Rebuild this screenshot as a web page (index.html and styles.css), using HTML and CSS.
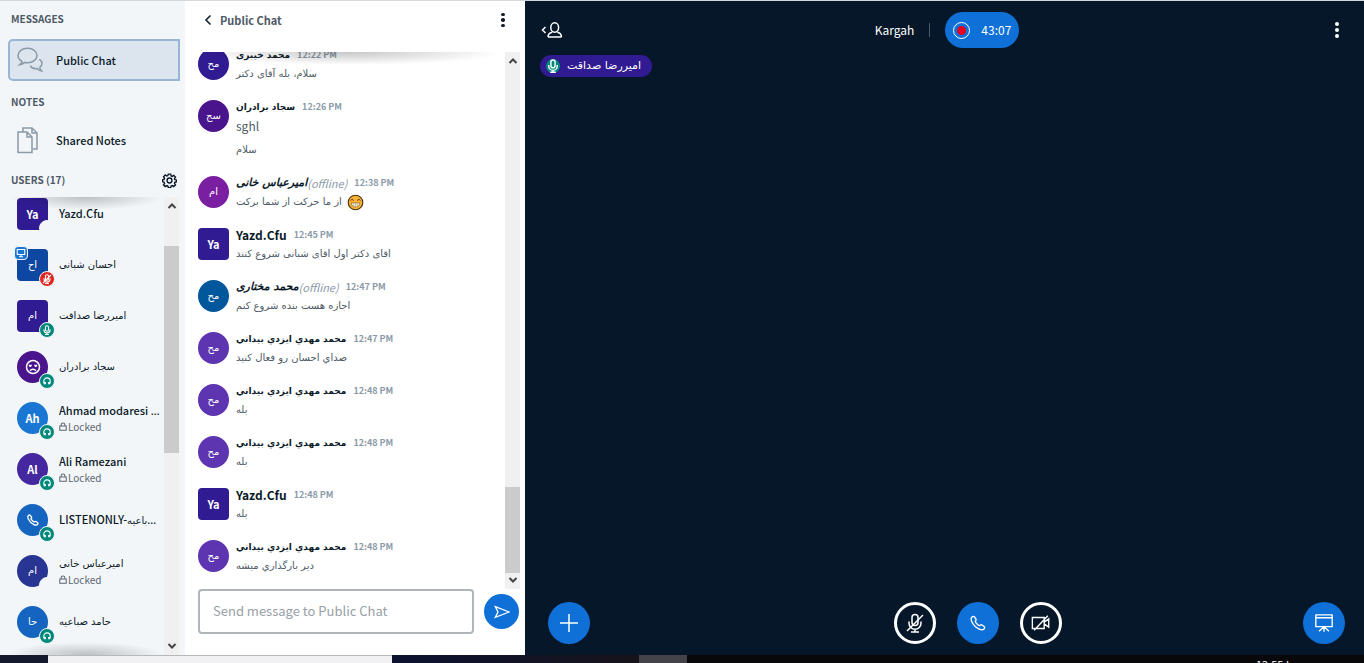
FILE: index.html
```html
<!DOCTYPE html>
<html lang="en">
<head>
<meta charset="utf-8">
<title>Kargah</title>
<link rel="stylesheet" href="styles.css">
</head>
<body>
<svg class="defs" aria-hidden="true">
  <symbol id="chat" viewBox="0 0 26 26"><path d="M5 14.3C2.600 13 1 11 1 8.500 1 4.400 5.200 1.200 10.500 1.200S20 4.400 20 8.500s-4.200 7.200-9.500 7.200c-1 0-2-.1-2.900-.3C6.300 16.700 4.500 17.600 2.700 17.800 4 16.800 4.800 15.600 5 14.300z"/><path d="M22.300 12.300c1.800.9 2.700 2.400 2.700 4.100 0 1.600-.8 3-2.200 3.900.1 1.400.7 2.600 1.700 3.600-1.800-.2-3.200-1-4.100-2.300-3.200.5-6-.7-7.200-3"/></symbol>
  <symbol id="notes" viewBox="0 0 26 28"><path d="M6 6V2h9l5 5v16h-4M15 2v5h5M1 6h9l5 5v15.500H1zM10 6v5h5"/></symbol>
  <symbol id="gear" viewBox="0 0 16 16"><circle cx="8" cy="8" r="2.600"/><path d="M6.700 1.200h2.600l.4 1.900 1.200.5 1.600-1.100 1.900 1.900-1.100 1.600.5 1.200 1.900.4v1.800l-1.900.4-.5 1.200 1.100 1.600-1.900 1.900-1.600-1.100-1.200.5-.4 1.900H6.700l-.4-1.900-1.200-.5-1.600 1.100-1.900-1.900L2.700 11l-.5-1.200-1.500-.4V7.200l1.500-.4.5-1.200L1.600 4 3.500 2.100l1.600 1.100 1.200-.5z"/></symbol>
  <symbol id="lock" viewBox="0 0 10 11"><path d="M1 5h8v5.300H1zM2.700 5V3.300a2.300 2.300 0 0 1 4.600 0V5"/></symbol>
  <symbol id="head" viewBox="0 0 12 12"><path d="M2.200 8V6a3.800 3.800 0 0 1 7.600 0v2"/><path d="M2.600 7v3M9.400 7v3M4 7.200v2.600M8 7.200v2.600"/></symbol>
  <symbol id="mic" viewBox="0 0 20 20"><rect x="7" y="1.500" width="6" height="11" rx="3"/><path d="M4 8.500v1.700a6 6 0 0 0 12 0V8.500M10 16v3M6 19h8"/></symbol>
  <symbol id="micoff" viewBox="0 0 20 20"><rect x="7" y="1.500" width="6" height="11" rx="3"/><path d="M4 8.500v1.700a6 6 0 0 0 12 0V8.500M10 16v3M6 19h8M18 2 2 18"/></symbol>
  <symbol id="screen" viewBox="0 0 12 12"><path d="M1.500 1.800h9v6h-9zM6 8v2M3.500 10.500h5"/></symbol>
  <symbol id="sad" viewBox="0 0 16 16"><circle cx="8" cy="8" r="6.500"/><path d="M3.800 6.600h3M9.200 6.600h3M5.200 7v1M10.800 7v1M5 11.800c1.600-2 4.400-2 6 0"/></symbol>
  <symbol id="phone" viewBox="0 0 18 18"><path d="M2.200 2.200c.9-.9 2-1 2.700-.2l1.700 2.300c.5.800.4 1.500-.3 2.200-.5.500-.4 1 .1 1.700.9 1.300 2 2.400 3.300 3.300.7.500 1.200.6 1.700.1.700-.7 1.400-.8 2.200-.3l2.300 1.700c.8.700.7 1.800-.2 2.700-1.300 1.300-3.200 1.200-5.300.2A18 18 0 0 1 2 7.500C1 5.400 1 3.500 2.200 2.200z"/></symbol>
  <symbol id="camoff" viewBox="0 0 22 18"><path d="M1.500 3h13v12h-13zM14.500 8l5-3.500v9l-5-3.500M18.500 1 3.500 17"/></symbol>
  <symbol id="board" viewBox="0 0 22 20"><path d="M1.500 1h19M2 1v13h18V1M2 4.200h18M11 14v5.500M11 14l-5.500 5M11 14l5.500 5"/></symbol>
  <symbol id="plus" viewBox="0 0 20 20"><path d="M10 1v18M1 10h18"/></symbol>
  <symbol id="send" viewBox="0 0 18 16"><path d="M1.500 2 17 8 1.500 14 4.500 8z"/></symbol>
  <symbol id="person" viewBox="0 0 22 16"><path d="M4.500 5 1.500 8l3 3M7 15c.2-3.300 2-4.500 4.300-4.800M20.500 15c-.2-3.300-2-4.500-4.300-4.800M7 15h13.500"/><ellipse cx="13.700" cy="5.500" rx="3.900" ry="4.700"/></symbol>
  <symbol id="left" viewBox="0 0 8 12"><path d="M6.500 1.500 2 6l4.500 4.500"/></symbol>
  <symbol id="up" viewBox="0 0 10 8"><path d="M1.500 6 5 2.500 8.500 6"/></symbol>
  <symbol id="down" viewBox="0 0 10 8"><path d="M1.500 2 5 5.500 8.500 2"/></symbol>
  <symbol id="grin" viewBox="0 0 18 18"><circle cx="9" cy="9" r="7.700" fill="#f9b233" stroke="#4b3510" stroke-width="1.200"/><path d="M3.800 6.800c.8-1.200 2.400-1.200 3.200 0M11 6.800c.8-1.200 2.400-1.200 3.200 0" fill="none" stroke="#3b2a10"/><path d="M4.500 9.500h9c0 2.800-1.800 4.200-4.500 4.200s-4.500-1.400-4.500-4.200z" fill="#fff" stroke="#8a6a30" stroke-width=".8"/><path d="M4.800 11.500h8.400M7 9.500v4M9 9.500v4M11 9.500v4" fill="none" stroke="#b79a62" stroke-width=".5"/></symbol>
</svg>

<div class="app">
  <nav class="sidebar">
    <h2 class="side-title">MESSAGES</h2>
    <button class="side-item active"><svg class="icon i26"><use href="#chat"/></svg>Public Chat</button>
    <h2 class="side-title">NOTES</h2>
    <button class="side-item"><svg class="icon i26"><use href="#notes"/></svg>Shared Notes</button>
    <div class="users-head"><h2 class="side-title">USERS (17)</h2><button class="bare" aria-label="Manage users"><svg class="icon i15"><use href="#gear"/></svg></button></div>
    <div class="users">
      <ul class="user-list">
        <li><span class="avatar sq c-indigo">Ya<i class="badge none"></i></span><span class="who">Yazd.Cfu</span></li>
        <li><span class="avatar sq c-navy"><bdi class="fa">اح</bdi><i class="badge pres"><svg class="icon i10"><use href="#screen"/></svg></i><i class="badge red"><svg class="icon i10 thin"><use href="#micoff"/></svg></i></span><span class="who fa">احسان شبانی</span></li>
        <li><span class="avatar sq c-indigo"><bdi class="fa">ام</bdi><i class="badge"><svg class="icon i10 thin"><use href="#mic"/></svg></i></span><span class="who fa">امیررضا صداقت</span></li>
        <li><span class="avatar c-purple"><svg class="icon i16"><use href="#sad"/></svg><i class="badge"><svg class="icon i10"><use href="#head"/></svg></i></span><span class="who fa">سجاد برادران</span></li>
        <li><span class="avatar c-sky">Ah<i class="badge"><svg class="icon i10"><use href="#head"/></svg></i></span><span class="who">Ahmad modaresi <span class="more">…</span><small><svg class="icon i8"><use href="#lock"/></svg>Locked</small></span></li>
        <li><span class="avatar c-violet">Al<i class="badge"><svg class="icon i10"><use href="#head"/></svg></i></span><span class="who">Ali Ramezani<small><svg class="icon i8"><use href="#lock"/></svg>Locked</small></span></li>
        <li><span class="avatar c-blue"><svg class="icon i12"><use href="#phone"/></svg><i class="badge"><svg class="icon i10"><use href="#head"/></svg></i></span><span class="who">LISTENONLY-<bdi class="fa">باعیه</bdi><span class="more">…</span></span></li>
        <li><span class="avatar c-dusk"><bdi class="fa">ام</bdi><i class="badge none"></i></span><span class="who"><bdi class="fa">امیرعباس خانی</bdi><small><svg class="icon i8"><use href="#lock"/></svg>Locked</small></span></li>
        <li><span class="avatar c-blue"><bdi class="fa">حا</bdi><i class="badge"><svg class="icon i10"><use href="#head"/></svg></i></span><span class="who fa">حامد صباعیه</span></li>
      </ul>
      <div class="scroll"><svg class="icon arrow"><use href="#up"/></svg><div class="track side-track"><i></i></div><svg class="icon arrow"><use href="#down"/></svg></div>
    </div>
  </nav>

  <section class="chat">
    <header class="chat-head"><button class="bare back"><svg class="icon chev"><use href="#left"/></svg>Public Chat</button><button class="bare dots" aria-label="Chat options"><i></i><i></i><i></i></button></header>
    <div class="history">
      <div class="messages">
        <article><span class="avatar c-indigo"><bdi class="fa">مح</bdi></span><div><h3><bdi class="fa">محمد خیبری</bdi><time>12:22 PM</time></h3><p class="fa"><bdi>سلام، بله آقای دکتر</bdi></p></div></article>
        <article><span class="avatar c-purple"><bdi class="fa">سج</bdi></span><div><h3><bdi class="fa">سجاد برادران</bdi><time>12:26 PM</time></h3><p>sghl</p><p class="fa next"><bdi>سلام</bdi></p></div></article>
        <article><span class="avatar c-magenta"><bdi class="fa">ام</bdi></span><div><h3><bdi class="fa off">امیرعباس خانی</bdi><em>(offline)</em><time>12:38 PM</time></h3><p class="fa"><bdi>از ما حرکت از شما برکت</bdi><svg class="emoji" role="img" aria-label="grin"><use href="#grin"/></svg></p></div></article>
        <article><span class="avatar sq c-indigo">Ya</span><div><h3>Yazd.Cfu<time>12:45 PM</time></h3><p class="fa"><bdi>اقای دکتر اول اقای شبانی شروع کنند</bdi></p></div></article>
        <article><span class="avatar c-ocean"><bdi class="fa">مح</bdi></span><div><h3><bdi class="fa off">محمد مختاری</bdi><em>(offline)</em><time>12:47 PM</time></h3><p class="fa"><bdi>اجازه هست بنده شروع کنم</bdi></p></div></article>
        <article><span class="avatar c-grape"><bdi class="fa">مح</bdi></span><div><h3><bdi class="fa">محمد مهدي ايزدي بيداني</bdi><time>12:47 PM</time></h3><p class="fa"><bdi>صداي احسان رو فعال كنيد</bdi></p></div></article>
        <article><span class="avatar c-grape"><bdi class="fa">مح</bdi></span><div><h3><bdi class="fa">محمد مهدي ايزدي بيداني</bdi><time>12:48 PM</time></h3><p class="fa"><bdi>بله</bdi></p></div></article>
        <article><span class="avatar c-grape"><bdi class="fa">مح</bdi></span><div><h3><bdi class="fa">محمد مهدي ايزدي بيداني</bdi><time>12:48 PM</time></h3><p class="fa"><bdi>بله</bdi></p></div></article>
        <article><span class="avatar sq c-indigo">Ya</span><div><h3>Yazd.Cfu<time>12:48 PM</time></h3><p class="fa"><bdi>بله</bdi></p></div></article>
        <article><span class="avatar c-grape"><bdi class="fa">مح</bdi></span><div><h3><bdi class="fa">محمد مهدي ايزدي بيداني</bdi><time>12:48 PM</time></h3><p class="fa"><bdi>دير بارگذاري ميشه</bdi></p></div></article>
      </div>
      <div class="scroll"><svg class="icon arrow"><use href="#up"/></svg><div class="track chat-track"><i></i></div><svg class="icon arrow"><use href="#down"/></svg></div>
    </div>
    <form class="composer"><input type="text" aria-label="Message" placeholder="Send message to Public Chat"><button class="round send" type="button" aria-label="Send message"><svg class="icon i16"><use href="#send"/></svg></button></form>
  </section>

  <main class="stage">
    <header class="stage-head">
      <button class="bare" aria-label="Toggle user list"><svg class="icon person"><use href="#person"/></svg></button>
      <div class="room"><span>Kargah</span><i class="bar"></i><button class="rec"><i class="rec-dot"></i>43:07</button></div>
      <button class="bare dots" aria-label="Options"><i></i><i></i><i></i></button>
    </header>
    <button class="talking"><i class="badge-in"><svg class="icon i14"><use href="#mic"/></svg></i><bdi class="fa">امیررضا صداقت</bdi></button>
    <footer class="controls">
      <button class="round" aria-label="Actions"><svg class="icon i20"><use href="#plus"/></svg></button>
      <div class="media">
        <button class="round ghost" aria-label="Unmute"><svg class="icon i20"><use href="#micoff"/></svg></button>
        <button class="round" aria-label="Leave audio"><svg class="icon i16"><use href="#phone"/></svg></button>
        <button class="round ghost" aria-label="Share webcam"><svg class="icon i20"><use href="#camoff"/></svg></button>
      </div>
      <button class="round" aria-label="Restore presentation"><svg class="icon i20"><use href="#board"/></svg></button>
    </footer>
  </main>
</div>
<div class="taskbar"><i class="tb-start"></i><i class="tb-search"></i><i class="tb-apps"></i><i class="tb-open"></i><span class="tb-rest"><span class="clock">12:55 ا</span></span></div>
</body>
</html>
```

FILE: styles.css
```css
* { box-sizing: border-box; }
body {
  margin: 0;
  height: 100vh;
  display: flex;
  flex-direction: column;
  overflow: hidden;
  font-family: "Noto Sans CJK SC", "DejaVu Sans", sans-serif;
  font-size: 12px;
  line-height: 18px;
  color: #0b1a29;
}
h2, h3, p, ul { margin: 0; padding: 0; list-style: none; }
button { font: inherit; color: inherit; padding: 0; border: 0; cursor: pointer; }
i { font-style: normal; }
.defs { display: none; }
.fa { font-family: "DejaVu Sans", sans-serif; font-size: 10px; }

.icon { fill: none; stroke: currentColor; stroke-width: 1.5; flex: none; display: block; }
.i8 { width: 8px; height: 9px; stroke-width: 1.3; }
.i10 { width: 10px; height: 10px; stroke-width: 1.3; }
.i12 { width: 12px; height: 12px; stroke-width: 2; }
.i14 { width: 14px; height: 14px; stroke-width: 2; }
.i15 { width: 15px; height: 15px; }
.i16 { width: 16px; height: 16px; }
.i20 { width: 20px; height: 20px; }
.i26 { width: 26px; height: 28px; stroke: #8b9aa8; }
.thin { stroke-width: 2.2; }

.app { flex: 1; min-height: 0; display: flex; border-top: 1px solid #d3d8dc; }

.bare { background: none; display: flex; align-items: center; }
.dots { flex-direction: column; gap: 2px; padding: 4px; }
.dots i { width: 4px; height: 4px; border-radius: 50%; background: currentColor; }

/* Sidebar */
.sidebar { flex: 0 0 185px; min-width: 0; background: #f3f6f9; display: flex; flex-direction: column; padding-top: 9px; }
.side-title { font-size: 10px; font-weight: 700; line-height: 18px; color: #4e5a66; padding-left: 11px; }
.side-item {
  display: flex;
  align-items: center;
  gap: 13px;
  height: 42px;
  margin: 8px 5px 10px 8px;
  padding-left: 7px;
  border: 2px solid transparent;
  border-radius: 5px 0 0 5px;
  background: none;
  font-size: 11px;
  font-weight: 500;
  text-align: left;
}
.active { margin: 11px 5px 12px 8px; background: #dce4ed; border-color: #98b5d6; }
.users-head { display: flex; align-items: center; justify-content: space-between; padding-right: 8px; }
.users { flex: 1; min-height: 0; margin-top: 8px; display: flex; padding-right: 6px; overflow: hidden; position: relative; }
.users::before, .users::after, .history::before {
  content: "";
  position: absolute;
  z-index: 1;
  left: 8px;
  right: 22px;
  top: 0;
  height: 13px;
  background: radial-gradient(farthest-side at 50% 0, rgba(0, 0, 0, .22), rgba(0, 0, 0, 0));
}
.users::after { top: auto; bottom: 0; background: radial-gradient(farthest-side at 50% 100%, rgba(0, 0, 0, .22), rgba(0, 0, 0, 0)); }
.user-list { flex: 1; min-width: 0; margin-top: -9px; padding-left: 17px; }
.user-list li { height: 51px; display: flex; align-items: center; gap: 11px; }
.who { white-space: nowrap; line-height: 17px; font-size: 11px; font-weight: 500; }
.who.fa, .who .fa { font-size: 10px; font-weight: 400; }
.more { font-family: "Noto Sans", sans-serif; }
.who small { display: flex; align-items: center; gap: 1px; font-size: 10px; font-weight: 400; line-height: 15px; color: #5a6672; }

.avatar {
  position: relative;
  flex: none;
  width: 31px;
  height: 32px;
  border-radius: 50%;
  display: flex;
  align-items: center;
  justify-content: center;
  color: #fff;
  font-size: 11px;
  font-weight: 700;
}
.avatar .fa { font-weight: 400; }
.sq { border-radius: 4px; }
.c-indigo { background: #311b92; }
.c-navy { background: #0d47a1; }
.c-purple { background: #4a148c; }
.c-sky { background: #1976d2; }
.c-violet { background: #4527a0; }
.c-blue { background: #1565c0; }
.c-dusk { background: #283593; }
.c-magenta { background: #7b1fa2; }
.c-ocean { background: #01579b; }
.c-grape { background: #5e35b1; }
.badge {
  position: absolute;
  right: -7px;
  bottom: -6px;
  width: 16px;
  height: 16px;
  border: 1px solid #f3f6f9;
  border-radius: 50%;
  background: #00897b;
  display: flex;
  align-items: center;
  justify-content: center;
}
.badge.red { background: #df2721; }
.badge.none { background: #f3f6f9; }
.badge.pres { right: auto; bottom: auto; left: -3px; top: -3px; width: 14px; height: 14px; border-radius: 4px; background: #1976d2; }

.scroll { flex: 0 0 15px; background: #f0f0f1; display: flex; flex-direction: column; align-items: center; padding: 5px 0; color: #444; }
.arrow { width: 10px; height: 8px; stroke-width: 2; }
.track { flex: 1; width: 100%; display: flex; flex-direction: column; margin: 3px 0; }
.track i { background: #cbcbcc; }
.side-track::before { content: ""; flex: 33; }
.side-track i { flex: 208; }
.side-track::after { content: ""; flex: 186; }
.chat-track::before { content: ""; flex: 419; }
.chat-track i { flex: 86; }

/* Chat panel */
.chat { flex: 0 0 340px; min-width: 0; background: #fff; display: flex; flex-direction: column; }
.chat-head { height: 51px; display: flex; align-items: flex-start; justify-content: space-between; padding: 8px 16px 0 19px; }
.back { gap: 8px; font-size: 11px; font-weight: 700; line-height: 22px; color: #4e5a66; }
.chev { width: 8px; height: 12px; color: #0b1a29; }
.chat-head .dots { height: 22px; justify-content: center; }
.history { flex: 1; min-height: 0; position: relative; display: flex; padding-right: 5px; overflow: hidden; }
.messages { flex: 1; min-width: 0; display: flex; flex-direction: column; justify-content: flex-end; gap: 14px; padding: 0 0 13px 13px; }
article { display: flex; gap: 7px; }
article .avatar { margin-top: 2px; }
h3 { display: flex; align-items: center; font-size: 12px; font-weight: 700; line-height: 18px; white-space: nowrap; }
h3 .fa { font-size: 9px; }
h3 .off { font-size: 11px; font-style: italic; }
h3 em { font-size: 11px; font-weight: 400; color: #8b9aa8; }
time { margin-left: 7px; font-size: 9px; font-weight: 700; color: #8b9aa8; }
p { display: flex; align-items: center; gap: 5px; line-height: 20px; height: 20px; color: #4e5a66; white-space: nowrap; }
p.next { height: 24px; padding-top: 4px; }
.emoji { width: 17px; height: 17px; }
.composer { display: flex; align-items: center; gap: 10px; padding: 0 6px 21px 13px; }
.composer input {
  flex: 1;
  min-width: 0;
  height: 45px;
  padding: 0 13px 3px;
  border: 2px solid #b1b5b9;
  border-radius: 4px;
  font: inherit;
  font-size: 13px;
}
.composer input::placeholder { color: #98a0a6; }
.round {
  width: 42px;
  height: 42px;
  flex: none;
  border-radius: 50%;
  background: #0f70d7;
  color: #fff;
  display: flex;
  align-items: center;
  justify-content: center;
}
.round.send { width: 35px; height: 35px; }
.ghost { background: transparent; border: 3px solid #fff; }

/* Stage */
.stage { flex: 1; min-width: 0; background: #061729; color: #fff; display: flex; flex-direction: column; align-items: flex-start; }
.stage-head { width: 100%; display: flex; align-items: center; justify-content: space-between; padding: 11px 21px 0 16px; }
.person { width: 22px; height: 16px; }
.room { display: flex; align-items: center; gap: 15px; }
.bar { width: 1px; height: 14px; background: #4e5a66; }
.rec { height: 36px; padding: 0 8px; border-radius: 18px; background: #0f70d7; display: flex; align-items: center; gap: 11px; }
.rec-dot { width: 17px; height: 17px; border: 1px solid #fff; border-radius: 50%; background: radial-gradient(circle, #e6001f 4px, transparent 5px); }
.talking { margin: 7px 0 0 15px; height: 22px; padding: 0 11px 0 6px; border-radius: 11px; background: #311b92; display: flex; align-items: center; gap: 7px; }
.talking .fa { font-size: 11px; }
.badge-in { width: 14px; height: 14px; border-radius: 50%; background: #00897b; }
.controls { width: 100%; margin-top: auto; padding: 0 19px 11px 23px; display: flex; justify-content: space-between; }
.media { display: flex; gap: 21px; padding-left: 63px; }

/* Desktop strip */
.taskbar { flex: 0 0 8px; display: flex; background: #0c0c14; overflow: hidden; }
.tb-start { flex: 0 0 48px; background: #14192d; }
.tb-search { flex: 0 0 344px; background: #f1f1f4; border-top: 1px solid #b5b8bc; }
.tb-apps { flex: 0 0 247px; background: linear-gradient(90deg, #0c1230, #17131a); }
.tb-open { flex: 0 0 48px; background: #444349; }
.tb-rest { flex: 1; display: flex; justify-content: flex-end; background: #08080b; color: #fff; padding-right: 75px; }
.clock { font-size: 11px; line-height: 18px; }
```
